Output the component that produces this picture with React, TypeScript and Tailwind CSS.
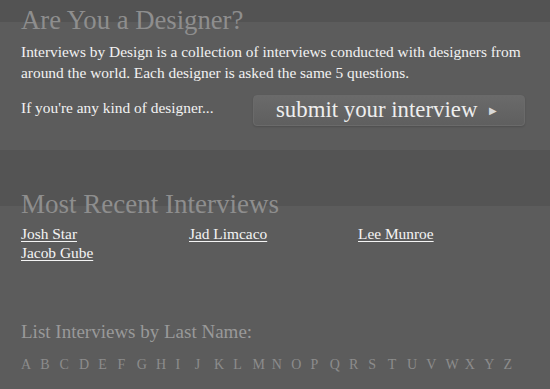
import React from 'react';

const recent = ['Josh Star', 'Jad Limcaco', 'Lee Munroe', 'Jacob Gube'];
const letters = 'ABCDEFGHIJKLMNOPQRSTUVWXYZ'.split('');

const App: React.FC = () => {
  return (
    <div className="w-[550px] h-[389px] overflow-hidden bg-[#5c5c5c] font-['Liberation_Serif',serif]">
      {/* intro */}
      <section className="bg-[linear-gradient(#535353_0,#535353_22px,#5c5c5c_22px)] px-[21px] pt-[5px] h-[150px]">
        <h1 className="text-[26.7px] leading-[30px] text-[#8e8e8e]">Are You a Designer?</h1>
        <p className="mt-[6px] text-[15.4px] leading-[21px] text-[#f2f2f2]">
          Interviews by Design is a collection of interviews conducted with designers from around the world. Each designer is asked the same 5 questions.
        </p>
        <div className="mt-[6px] flex items-center justify-between pr-[4px]">
          <span className="text-[15.4px] text-[#f2f2f2]">If you're any kind of designer...</span>
          <button className="mt-[6px] flex h-[31px] w-[272px] items-center gap-[12px] rounded-[4px] border border-[#6a6a6a] bg-[linear-gradient(#6a6a6a,#5f5f5f)] pl-[22px] text-[22.8px] text-[#eeeeee] shadow-[0_1px_2px_rgba(0,0,0,0.15)]">
            submit your interview
            <span className="text-[10px] text-[#d8d8d8]">▶</span>
          </button>
        </div>
      </section>

      {/* recent */}
      <section className="bg-[linear-gradient(#545454_0,#545454_56px,#5c5c5c_56px)] px-[21px] pt-[39px]">
        <h2 className="text-[27px] leading-[30px] text-[#8e8e8e]">Most Recent Interviews</h2>
        <ul className="mt-[5px] grid grid-cols-[168px_169px_1fr] text-[15.4px] leading-[19px]">
          {recent.map((name) => (
            <li key={name}>
              <a href="#" className="text-[#f4f4f4] underline underline-offset-2">{name}</a>
            </li>
          ))}
        </ul>
      </section>

      {/* by last name */}
      <section className="px-[21px] pt-[58px]">
        <h3 className="text-[19px] leading-[24px] text-[#999999]">List Interviews by Last Name:</h3>
        <div className="mt-[10px] flex text-[14px] text-[#8c8c8c]">
          {letters.map((l) => (
            <a key={l} href="#" className="w-[19.3px]">{l}</a>
          ))}
        </div>
      </section>
    </div>
  );
};

export default App;
